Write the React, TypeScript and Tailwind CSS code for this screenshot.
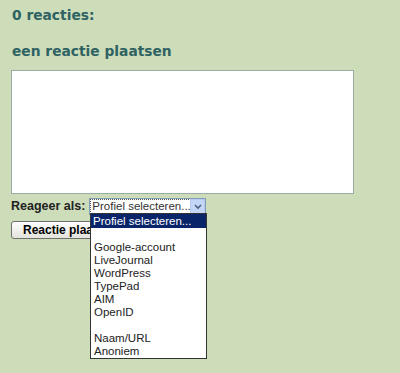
import React from "react";

const items = ["", "Google-account", "LiveJournal", "WordPress", "TypePad", "AIM", "OpenID", "", "Naam/URL", "Anoniem"];

export default function App() {
  return (
    <div className="w-[400px] h-[373px] bg-[#cddcb9] overflow-hidden relative" style={{ fontFamily: '"Liberation Sans", Arial, sans-serif' }}>
      <div className="pl-[12px] pt-[7px]">
        <div className="text-[13.8px] leading-[16px] font-bold text-[#2f6262]" style={{ fontFamily: '"DejaVu Sans", Verdana, sans-serif' }}>0 reacties:</div>
        <div className="mt-[20px] text-[13.8px] leading-[16px] font-bold text-[#2f6262]" style={{ fontFamily: '"DejaVu Sans", Verdana, sans-serif' }}>een reactie plaatsen</div>
      </div>
      <div className="ml-[11px] mt-[11px] w-[343px] h-[124px] bg-white border border-[#9aaba5]"></div>
      <div className="ml-[11px] mt-[4px] flex items-center h-[17px]">
        <span className="text-[12.5px] font-bold text-[#222]">Reageer als:</span>
        <div className="ml-[4px] relative w-[117px] h-[17px] bg-white border border-[#7f9db9] flex items-center">
          <span className="ml-[1px] px-[1px] text-[11.5px] leading-[13px] text-[#333] outline-1 outline-dotted outline-[#555]">Profiel selecteren...</span>
          <div className="absolute right-[0px] top-[0px] w-[15px] h-[15px] bg-[#c4d6f7] border border-[#b8cbee] flex items-center justify-center">
            <svg width="8" height="6" viewBox="0 0 8 6"><path d="M1 1 L4 4 L7 1" stroke="#4d6185" strokeWidth="1.6" fill="none" /></svg>
          </div>
        </div>
      </div>
      <div className="ml-[11px] mt-[6px] w-[140px] h-[18px] rounded-[3px] border border-[#707070] bg-gradient-to-b from-white to-[#e3e3dc] flex items-center pl-[11px]">
        <span className="text-[12px] font-bold text-black">Reactie plaatsen</span>
      </div>
      <div className="absolute left-[90px] top-[213px] w-[117px] bg-white border border-[#333]">
        <div className="bg-[#0a246a] text-white text-[11.5px] leading-[14px] h-[14px] pl-[2px]">Profiel selecteren...</div>
        {items.map((t, i) => (
          <div key={i} className="text-[11.5px] leading-[13px] h-[13px] pl-[3px] text-[#222]">{t}</div>
        ))}
      </div>
    </div>
  );
}
